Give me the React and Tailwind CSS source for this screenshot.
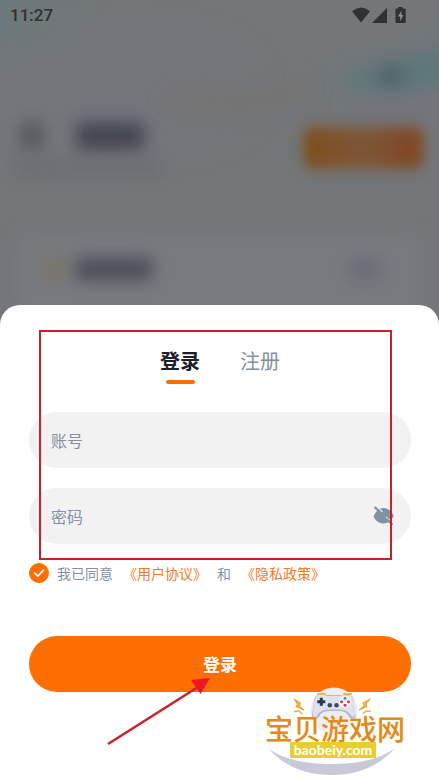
import { useState } from 'react';

// Blurred home page behind the login sheet
function Backdrop() {
  return (
    <div className="relative overflow-hidden bg-[#73777a]" aria-hidden="true">
      <svg className="absolute inset-0 w-full h-full" viewBox="0 0 439 325" preserveAspectRatio="none">
        <defs>
          <filter id="soft" x="-50%" y="-100%" width="200%" height="300%">
            <feGaussianBlur stdDeviation="12" />
          </filter>
          <filter id="wide" x="-50%" y="-100%" width="200%" height="300%">
            <feGaussianBlur stdDeviation="24" />
          </filter>
        </defs>
        <ellipse cx="0" cy="20" rx="60" ry="30" fill="#6a797a" filter="url(#wide)" />
        <ellipse cx="120" cy="90" rx="120" ry="40" fill="#74767d" filter="url(#wide)" />
        <path d="M345 74 Q400 70 450 42 L450 82 Q390 96 345 90Z" fill="#587879" filter="url(#soft)" />
        <path d="M170 96 Q240 104 310 84 L310 96 Q240 116 170 106Z" fill="#776e62" opacity="0.7" filter="url(#soft)" />
        <ellipse cx="410" cy="108" rx="60" ry="12" fill="#75757d" filter="url(#soft)" />
      </svg>

      <div className="relative px-4 pt-[68px]">
        <div className="flex justify-end pr-5">
          <div className="w-6 h-4 rounded-full bg-[#4b5a62] blur-[9px]" />
        </div>

        <div className="flex items-center justify-between mt-[38px]">
          <div>
            <div className="flex gap-8 pl-1 blur-[8px]">
              <div className="w-6 h-7 rounded bg-[#585b60]" />
              <div className="w-[68px] h-7 rounded bg-[#444752]" />
            </div>
            <div className="w-[144px] h-3 mt-3 bg-[#686b72] blur-[8px]" />
          </div>
          <div className="w-[120px] h-[42px] rounded-lg bg-linear-to-r from-[#804f18] via-[#7d5637] to-[#82451d] blur-[7px]" />
        </div>

        <div className="mt-[58px] relative">
          <div className="absolute inset-0 rounded-xl bg-[#777a7e] blur-[8px]" />
          <div className="relative flex items-center pt-[26px] pl-7 pr-11 pb-[45px]">
            <div className="w-5 h-5 rounded-full bg-[#80725f] blur-[8px]" />
            <div className="w-[76px] h-[22px] ml-3 rounded bg-[#4b4e57] blur-[8px]" />
            <div className="w-7 h-4 ml-auto rounded bg-[#666973] blur-[8px]" />
          </div>
        </div>
      </div>
    </div>
  );
}

function StatusBar() {
  return (
    <div className="absolute top-0 inset-x-0 flex items-center justify-between h-[30px] pl-[10px] pr-[33px] text-[#2f3133] z-10">
      <span className="text-[17px] leading-none font-medium font-['Roboto',sans-serif]">11:27</span>
      <svg className="w-[54px] h-4" viewBox="0 0 54 16" fill="currentColor">
        <path d="M0 4.2 Q9 -3.2 18 4.2 L9 15.5Z" />
        <path d="M20 16 L35 1 V16Z" />
        <path d="M46.5 0h4v1.6h2.2a1 1 0 0 1 1 1V15a1 1 0 0 1-1 1h-8.2a1 1 0 0 1-1-1V2.6a1 1 0 0 1 1-1h2Z" />
        <path d="M49.4 3.6 L46 9.6h2.2v4.6L51.4 8h-2Z" fill="#8b8e90" />
      </svg>
    </div>
  );
}

function EyeOffIcon() {
  return (
    <svg className="w-[22px] h-5" viewBox="0 0 22 20" fill="none">
      <path d="M0.5 10.500 Q4 2 10.500 2 T20.800 10 Q17 17.500 10.500 17.500 T0.500 10.500Z" fill="#8590a0" />
      <path d="M4.800 2 L9.500 6 M13 11.400 L19.500 17" stroke="#f2f2f2" strokeWidth="1.500" />
      <path d="M1.600 1.200 L7.500 6.200 M13 12.600 L19.600 18.600" stroke="#8590a0" strokeWidth="2.200" />
    </svg>
  );
}

function SiteMark() {
  return (
    <div className="absolute right-[34px] bottom-[3px] w-[140px] h-[90px] pointer-events-none">
      <svg className="absolute inset-0 w-full h-full" viewBox="0 0 140 90" fill="none">
        <circle cx="69" cy="24" r="23.500" fill="#eeeef0" />
        <path d="M4 62 Q25 77 67 77 Q109 77 130 61 Q106 88 67 88 Q27 88 4 62Z" fill="#c9cad8" />
        {/* Gamepad */}
        <path d="M52 8 Q49 9 48.500 17 L47 29 Q47 33 50 33 Q52 33 55 28 Q58 24 64 24 L75 24 Q80 24 83 28 Q86 33 88 33 Q91 33 90.500 29 L89 17 Q89 9 85 8Z" fill="#b4b6c9" />
        <path d="M52 8 Q59 7 62 9 L75 9 Q79 7 86 8 Q89.500 12 90 27 Q90 30 88 30 Q86 29 83 25 Q80 22.500 75 22.500 L63 22.500 Q58 22.500 55 25 Q52 29 50 30 Q48 30 48 27 Q48.500 11 52 8Z" fill="#dfe1eb" />
        <path d="M53 7h7M79 7h7" stroke="#f0b53c" strokeWidth="1.800" strokeLinecap="round" />
        <path d="M52.300 14.700h8M56.300 10.700v8" stroke="#263a54" strokeWidth="3" />
        <circle cx="64.800" cy="18.300" r="2.300" fill="#394d66" />
        <circle cx="71.500" cy="18.300" r="2.300" fill="#394d66" />
        <circle cx="80" cy="14.700" r="6" fill="#f8f8fb" />
        <circle cx="80" cy="11.200" r="1.500" fill="#2e9aa8" />
        <circle cx="83.500" cy="14.700" r="1.500" fill="#d8394b" />
        <circle cx="80" cy="18.200" r="1.500" fill="#d8394b" />
        <circle cx="76.500" cy="14.700" r="1.500" fill="#d8394b" />
        {/* Sparks */}
        <path d="M29 12 L35.500 16 L34.500 19 L39 23 L31 19.500 L32.500 17Z M105 12 L98 16 L99 19 L94 23 L102 19.500 L101 17Z" fill="#f5bd35" stroke="#dda02c" strokeWidth="1" />
        <path d="M29 24.500 L34 24 L37 27 M106 24.500 L101 24 L98 27" stroke="#eeb543" strokeWidth="1.500" />
      </svg>
      <div className="relative pt-[27px] flex flex-col items-center">
        <span className="text-[28px] leading-7 whitespace-nowrap text-[#e08a22] font-medium [text-shadow:0_0_2px_#fff5d8]">宝贝游戏网</span>
        <span className="w-[86px] mr-1 bg-[#e8cd35] text-white text-center text-[14px] leading-4 font-bold font-['Lato',sans-serif]">baobeiy.com</span>
      </div>
    </div>
  );
}

export default function App() {
  const [tab, setTab] = useState('login');
  const [showPassword, setShowPassword] = useState(false);
  const [agreed, setAgreed] = useState(true);

  const tabs = [
    { id: 'login', label: '登录' },
    { id: 'register', label: '注册' },
  ];

  return (
    <div className="relative min-h-screen flex flex-col bg-white font-['Noto_Sans_CJK_SC',sans-serif]">
      <StatusBar />
      <Backdrop />

      <main className="relative flex-1 -mt-5 pt-[42px] pb-[88px] pl-[29px] pr-7 bg-white rounded-t-[20px]">
        <div className="flex justify-center gap-10" role="tablist">
          {tabs.map((t) => (
            <button
              key={t.id}
              type="button"
              role="tab"
              aria-selected={tab === t.id}
              onClick={() => setTab(t.id)}
              className={`flex flex-col items-center gap-[5px] text-[20px] leading-7 ${tab === t.id ? 'font-bold text-[#1b202a]' : 'text-[#8590a0]'}`}
            >
              {t.label}
              <span className={`w-[29px] h-1 rounded-full ${tab === t.id ? 'bg-[#ff6e00]' : ''}`} />
            </button>
          ))}
        </div>

        <form className="mt-7" onSubmit={(e) => e.preventDefault()}>
          <input
            type="text"
            aria-label="账号"
            placeholder="账号"
            className="block w-full h-14 px-[22px] rounded-full bg-[#f2f2f2] text-base text-[#1b202a] placeholder:text-[#8590a0] outline-none"
          />
          <div className="relative mt-5">
            <input
              type={showPassword ? 'text' : 'password'}
              aria-label="密码"
              placeholder="密码"
              className="block w-full h-14 pl-[22px] pr-14 rounded-full bg-[#f2f2f2] text-base text-[#1b202a] placeholder:text-[#8590a0] outline-none"
            />
            <button
              type="button"
              aria-label="显示密码"
              onClick={() => setShowPassword(!showPassword)}
              className="absolute inset-y-0 right-4 flex items-center"
            >
              <EyeOffIcon />
            </button>
          </div>

          <div className="flex items-center mt-[19px] h-5 text-[14px] leading-5 whitespace-nowrap text-[#8590a0]">
            <span className="relative w-5 h-5 mr-2 shrink-0">
              <input
                id="agree"
                type="checkbox"
                checked={agreed}
                onChange={(e) => setAgreed(e.target.checked)}
                className="block w-5 h-5 appearance-none rounded-full border border-[#ff6e00] checked:bg-[#ff6e00]"
              />
              <svg className="absolute inset-0 w-5 h-5 pointer-events-none" viewBox="0 0 20 20" fill="none">
                <path d="M5.8 10.2 L8.800 13.200 L14.300 7.400" stroke="#fff" strokeWidth="1.800" strokeLinecap="round" strokeLinejoin="round" />
              </svg>
            </span>
            <div className="flex gap-[10px]">
              <label htmlFor="agree">我已同意</label>
              <a href="#terms" className="text-[#f07a28]">《用户协议》</a>
              <span>和</span>
              <a href="#privacy" className="text-[#f07a28]">《隐私政策》</a>
            </div>
          </div>

          <button type="submit" className="block w-full h-14 mt-[53px] rounded-full bg-[#ff6e00] text-[17px] font-bold text-white">
            登录
          </button>
        </form>

        {/* Highlight box and arrow */}
        <div className="absolute top-[25px] left-[39px] right-[47px] h-[230px] border-2 border-[#c9202b] pointer-events-none" />
        <svg className="absolute top-[372px] left-[106px] w-[106px] h-[70px] pointer-events-none" viewBox="0 0 106 70" fill="none">
          <path d="M2 67 L92 10" stroke="#cf1f28" strokeWidth="2.500" />
          <path d="M104 1 L85 3 L94.500 17Z" fill="#ee1620" />
        </svg>

        <SiteMark />
      </main>
    </div>
  );
}
